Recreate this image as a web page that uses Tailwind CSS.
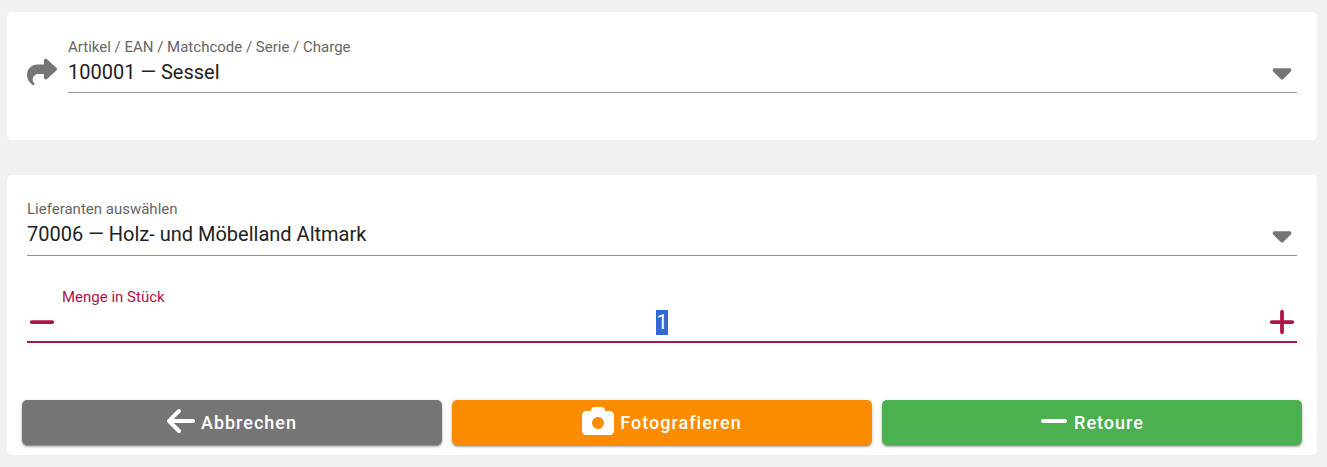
<!DOCTYPE html>
<html lang="de">
<head>
    <meta charset="UTF-8">
    <meta name="viewport" content="width=device-width, initial-scale=1.0">
    <title>Retoure</title>
    <script src="https://cdn.jsdelivr.net/npm/@tailwindcss/browser@4"></script>
</head>
<body class="bg-[#f0f2f1] min-h-screen font-[Roboto,sans-serif] text-[#212121]">
    <main class="flex flex-col gap-[35px] pt-3 pb-3 pl-[7px] pr-[10px]">

        <!-- Artikel -->
        <section class="bg-white rounded-[5px] px-5 pt-[25px] pb-[47px]">
            <div class="flex gap-[11px]">
                <button type="button" aria-label="Übernehmen" class="w-[30px] h-[30px] mt-5 shrink-0 text-[#757575] cursor-pointer">
                    <svg class="w-[30px] h-[30px]" viewBox="0 0 512 512" fill="currentColor"><path d="M307 34.8c-11.5 5.1-19 16.6-19 29.2v64H176C78.8 128 0 206.8 0 304C0 417.3 81.5 467.9 100.2 478.1c2.5 1.4 5.3 1.9 8.1 1.9c10.9 0 19.7-8.9 19.7-19.7c0-7.5-4.3-14.4-9.8-19.5C108.8 431.9 96 414.4 96 384c0-53 43-96 96-96h96v64c0 12.6 7.4 24.1 19 29.2s25 3 34.4-5.4l160-144c6.7-6.1 10.6-14.7 10.6-23.8s-3.8-17.7-10.6-23.8l-160-144c-9.4-8.5-22.9-10.6-34.4-5.4z"/></svg>
                </button>
                <div class="relative flex-1 border-b border-[#949494] pb-[5px]">
                    <label for="artikel" class="block text-[15px] leading-5 text-[#666]">Artikel / EAN / Matchcode / Serie / Charge</label>
                    <select id="artikel" class="block w-full h-[30px] pr-10 appearance-none bg-transparent text-xl leading-[30px] outline-none">
                        <option>100001 — Sessel</option>
                    </select>
                    <svg class="absolute right-0 top-5 w-[30px] h-[30px] text-[#757575] pointer-events-none" viewBox="-96 0 512 512" fill="currentColor"><path d="M137.4 374.6c12.5 12.5 32.8 12.5 45.3 0l128-128c9.2-9.2 11.9-22.9 6.9-34.9s-16.6-19.8-29.6-19.8L32 192c-12.9 0-24.6 7.8-29.6 19.8s-2.2 25.7 6.9 34.9l128 128z"/></svg>
                </div>
            </div>
        </section>

        <!-- Lieferant und Menge -->
        <section class="bg-white rounded-[5px] pt-6 pb-[10px]">
            <form id="retoureForm">
                <div class="px-5">
                    <div class="relative border-b border-[#949494] pb-[6px]">
                        <label for="lieferant" class="block text-[15px] leading-5 text-[#666]">Lieferanten auswählen</label>
                        <select id="lieferant" class="block w-full h-[30px] pr-10 appearance-none bg-transparent text-xl leading-[30px] outline-none">
                            <option>70006 — Holz- und Möbelland Altmark</option>
                        </select>
                        <svg class="absolute right-0 bottom-[5px] w-[30px] h-[30px] text-[#757575] pointer-events-none" viewBox="-96 0 512 512" fill="currentColor"><path d="M137.4 374.6c12.5 12.5 32.8 12.5 45.3 0l128-128c9.2-9.2 11.9-22.9 6.9-34.9s-16.6-19.8-29.6-19.8L32 192c-12.9 0-24.6 7.8-29.6 19.8s-2.2 25.7 6.9 34.9l128 128z"/></svg>
                    </div>

                    <div class="mt-[31px] border-b-2 border-[#ad1447] pb-1 text-[#ad1447]">
                        <label for="menge" class="block pl-[35px] text-[15px] leading-5">Menge in Stück</label>
                        <div class="flex items-center gap-[5px]">
                            <button type="button" id="minusBtn" aria-label="Weniger" class="w-[30px] h-[30px] shrink-0 cursor-pointer">
                                <svg class="w-[30px] h-[30px]" viewBox="-32 0 512 512" fill="currentColor"><path d="M432 256c0 17.7-14.3 32-32 32L48 288c-17.7 0-32-14.3-32-32s14.3-32 32-32l352 0c17.7 0 32 14.3 32 32z"/></svg>
                            </button>
                            <input type="text" inputmode="numeric" id="menge" name="menge" value="1" class="flex-1 min-w-0 h-[25px] text-xl leading-[25px] text-center text-[#212121] outline-none selection:bg-[#3367d1] selection:text-white">
                            <button type="button" id="plusBtn" aria-label="Mehr" class="w-[30px] h-[30px] shrink-0 cursor-pointer">
                                <svg class="w-[30px] h-[30px]" viewBox="-32 0 512 512" fill="currentColor"><path d="M256 80c0-17.7-14.3-32-32-32s-32 14.3-32 32V224H48c-17.7 0-32 14.3-32 32s14.3 32 32 32H192V432c0 17.7 14.3 32 32 32s32-14.3 32-32V288H400c17.7 0 32-14.3 32-32s-14.3-32-32-32H256V80z"/></svg>
                            </button>
                        </div>
                    </div>
                </div>

                <div class="mt-[57px] px-[15px] grid grid-cols-3 gap-[10px] text-lg font-medium tracking-[1px] text-white">
                    <button type="button" class="flex items-center justify-center gap-[6px] h-[45px] rounded-[5px] bg-[#757575] shadow-[0_3px_1px_-2px_rgba(0,0,0,0.2),0_2px_2px_0_rgba(0,0,0,0.24),0_1px_5px_0_rgba(0,0,0,0.12)] cursor-pointer">
                        <svg class="w-7 h-8 mb-1" viewBox="0 0 448 512" fill="currentColor"><path d="M9.4 233.4c-12.5 12.5-12.5 32.8 0 45.3l160 160c12.5 12.5 32.8 12.5 45.3 0s12.5-32.8 0-45.3L109.2 288 416 288c17.7 0 32-14.3 32-32s-14.3-32-32-32l-306.7 0L214.6 118.6c12.5-12.5 12.5-32.8 0-45.3s-32.8-12.5-45.3 0l-160 160z"/></svg>
                        <span>Abbrechen</span>
                    </button>
                    <button type="button" class="flex items-center justify-center gap-[6px] h-[45px] rounded-[5px] bg-[#fb8c00] shadow-[0_3px_1px_-2px_rgba(0,0,0,0.2),0_2px_2px_0_rgba(0,0,0,0.24),0_1px_5px_0_rgba(0,0,0,0.12)] cursor-pointer">
                        <svg class="w-8 h-8 mb-1" viewBox="0 0 512 512" fill="currentColor"><path d="M149.1 64.8L138.7 96H64C28.7 96 0 124.7 0 160V416c0 35.3 28.7 64 64 64H448c35.3 0 64-28.7 64-64V160c0-35.3-28.7-64-64-64H373.3L362.9 64.8C356.4 45.2 338.1 32 317.4 32H194.6c-20.7 0-39 13.2-45.5 32.8zM256 192a96 96 0 1 1 0 192 96 96 0 1 1 0-192z"/></svg>
                        <span>Fotografieren</span>
                    </button>
                    <button type="submit" class="flex items-center justify-center gap-[6px] h-[45px] rounded-[5px] bg-[#4caf50] shadow-[0_3px_1px_-2px_rgba(0,0,0,0.2),0_2px_2px_0_rgba(0,0,0,0.24),0_1px_5px_0_rgba(0,0,0,0.12)] cursor-pointer">
                        <svg class="w-7 h-8 mb-1" viewBox="0 0 448 512" fill="currentColor"><path d="M432 256c0 17.7-14.3 32-32 32L48 288c-17.7 0-32-14.3-32-32s14.3-32 32-32l352 0c17.7 0 32 14.3 32 32z"/></svg>
                        <span>Retoure</span>
                    </button>
                </div>
            </form>
        </section>
    </main>

    <script>
        const menge = document.getElementById('menge');

        // Menge ändern und den Wert wieder markieren
        function changeMenge(diff) {
            menge.value = Math.max(1, (parseInt(menge.value, 10) || 0) + diff);
            menge.focus();
            menge.select();
        }

        document.getElementById('minusBtn').addEventListener('click', () => changeMenge(-1));
        document.getElementById('plusBtn').addEventListener('click', () => changeMenge(1));
        document.getElementById('retoureForm').addEventListener('submit', (e) => e.preventDefault());

        changeMenge(0);
    </script>
</body>
</html>
